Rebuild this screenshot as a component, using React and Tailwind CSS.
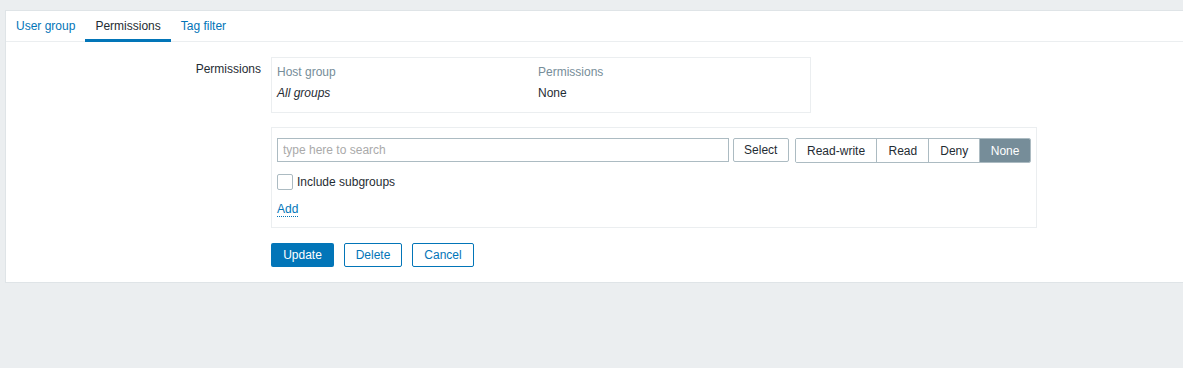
import React, { useState } from 'react';

// Zabbix-style user group form, "Permissions" tab.
const tabs = ['User group', 'Permissions', 'Tag filter'];
const levels = ['Read-write', 'Read', 'Deny', 'None'];

const App = () => {
  const [active, setActive] = useState('Permissions');
  const [level, setLevel] = useState('None');
  const [subgroups, setSubgroups] = useState(false);

  return (
    <div className="min-h-[368px] bg-[#ebeef0] pt-[10px] pl-[5px] font-['Liberation_Sans',Arial,sans-serif] text-[12px] text-[#1f2c33]">
      <div className="bg-white border border-r-0 border-[#dfe4e7] pb-[15px]">
        <ul className="flex h-[31px] border-b border-[#ebeef0]">
          {tabs.map((t) => (
            <li key={t}>
              <button
                type="button"
                onClick={() => setActive(t)}
                className={
                  'h-[31px] px-[10px] leading-[30px] border-b-[3px] ' +
                  (t === active ? 'border-[#0275b8] text-[#1f2c33]' : 'border-transparent text-[#0275b8]')
                }
              >
                {t}
              </button>
            </li>
          ))}
        </ul>

        <div className="flex pt-[15px]">
          <div className="w-[255px] text-right leading-[24px]">Permissions</div>
          <div className="ml-[10px] flex flex-col">
            <div className="w-[540px] h-[56px] border border-[#ebeef0] px-[5px] pt-[5px]">
              <div className="flex leading-[18px] text-[#768d99]">
                <div className="w-[261px]">Host group</div>
                <div>Permissions</div>
              </div>
              <div className="flex leading-[18px] mt-[3px]">
                <div className="w-[261px] italic">All groups</div>
                <div>None</div>
              </div>
            </div>

            <div className="w-[766px] h-[101px] mt-[14px] border border-[#ebeef0] px-[5px] pt-[10px]">
              <div className="flex items-start">
                <input
                  type="text"
                  placeholder="type here to search"
                  className="w-[453px] h-[24px] border border-[#acbbc2] px-[5px] outline-none placeholder:text-[#aaaaaa]"
                />
                <button
                  type="button"
                  className="ml-[4px] w-[56px] h-[24px] border border-[#acbbc2] rounded-[2px] bg-white"
                >
                  Select
                </button>
                <div className="ml-[6px] flex h-[25px] border border-[#acbbc2] rounded-[2px] overflow-hidden">
                  {levels.map((l, i) => (
                    <button
                      key={l}
                      type="button"
                      onClick={() => setLevel(l)}
                      className={
                        'h-full ' +
                        (i > 0 ? 'border-l border-[#acbbc2] ' : '') +
                        (l === 'Read-write' ? 'w-[81px] ' : l === 'Read' ? 'w-[52px] ' : 'w-[51px] ') +
                        (l === level ? 'bg-[#768d99] text-white' : 'bg-white')
                      }
                    >
                      {l}
                    </button>
                  ))}
                </div>
              </div>

              <label className="flex items-center mt-[10px] cursor-pointer">
                <input
                  type="checkbox"
                  checked={subgroups}
                  onChange={() => setSubgroups(!subgroups)}
                  className="appearance-none w-[16px] h-[16px] border border-[#acbbc2] rounded-[2px] bg-white"
                />
                <span className="ml-[4px]">Include subgroups</span>
              </label>

              <a
                href="#"
                className="inline-block mt-[11px] text-[#0275b8] leading-[14px] border-b border-dotted border-[#0275b8]"
              >
                Add
              </a>
            </div>

            <div className="flex gap-[10px] mt-[15px]">
              <button type="button" className="w-[63px] h-[24px] rounded-[2px] bg-[#0275b8] text-white">
                Update
              </button>
              <button
                type="button"
                className="w-[58px] h-[24px] rounded-[2px] border border-[#0275b8] text-[#0275b8] bg-white"
              >
                Delete
              </button>
              <button
                type="button"
                className="w-[62px] h-[24px] rounded-[2px] border border-[#0275b8] text-[#0275b8] bg-white"
              >
                Cancel
              </button>
            </div>
          </div>
        </div>
      </div>
    </div>
  );
};

export default App;
